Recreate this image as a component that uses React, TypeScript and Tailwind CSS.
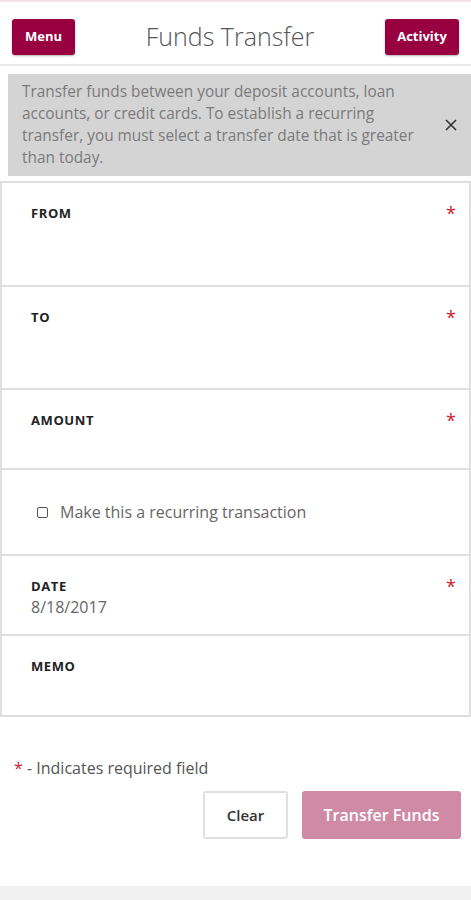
import React, { useState } from "react";

const Field = ({ label, required, value, h }: { label: string; required?: boolean; value?: string; h: string }) => (
  <div className={`flex justify-between border-b-2 border-[#dedede] pl-[29px] pr-[31px] pt-[21px] ${h}`}>
    <div>
      <div className="text-[13px] font-bold leading-[18px] tracking-[0.6px] text-[#222]">{label}</div>
      {value && <div className="mt-[2px] text-[16px] leading-[20px] text-[#666]">{value}</div>}
    </div>
    {required && <span className="mr-[-18px] text-[18px] leading-[18px] text-[#d0202e]">*</span>}
  </div>
);

const App = () => {
  const [recurring, setRecurring] = useState(false);
  const [showNotice, setShowNotice] = useState(true);

  return (
    <div className="min-h-[900px] bg-white font-['Open_Sans',sans-serif]">
      <div className="h-[2px] bg-[#f3e2e7]" />

      {/* Header */}
      <div className="flex h-[64px] items-center justify-between border-b-2 border-[#e8e8e8] px-[12px] pt-[8px]">
        <button className="h-[36px] w-[63px] rounded-[3px] bg-[#990040] text-[13px] font-bold text-white shadow-[0_1px_2px_rgba(0,0,0,0.3)]">
          Menu
        </button>
        <h1 className="text-[25px] font-light text-[#555]">Funds Transfer</h1>
        <button className="h-[36px] w-[74px] rounded-[3px] bg-[#990040] text-[13px] font-bold text-white shadow-[0_1px_2px_rgba(0,0,0,0.3)]">
          Activity
        </button>
      </div>

      {/* Notice */}
      {showNotice && (
        <div className="ml-[8px] mt-[8px] flex items-center bg-[#d4d4d4] py-[7px] pl-[14px] pr-[14px]">
          <p className="flex-1 text-[15.4px] leading-[22px] text-[#7a7a7a]">
            Transfer funds between your deposit accounts, loan accounts, or credit cards. To establish a recurring
            transfer, you must select a transfer date that is greater than today.
          </p>
          <button onClick={() => setShowNotice(false)} className="ml-[14px] text-[#333]">
            <svg width="12" height="12" viewBox="0 0 12 12">
              <path d="M1 1L11 11M11 1L1 11" stroke="#333" strokeWidth="1.6" />
            </svg>
          </button>
        </div>
      )}

      {/* Form */}
      <div className="mt-[5px] border-x-2 border-t-2 border-[#dedede]">
        <Field label="FROM" required h="h-[104px]" />
        <Field label="TO" required h="h-[103px]" />
        <Field label="AMOUNT" required h="h-[80px]" />
        <label className="flex h-[86px] cursor-pointer items-center border-b-2 border-[#dedede] pl-[35px]">
          <input
            type="checkbox"
            checked={recurring}
            onChange={e => setRecurring(e.target.checked)}
            className="h-[11px] w-[11px] appearance-none rounded-[2px] border border-[#555] checked:bg-[#990040]"
          />
          <span className="ml-[12px] text-[16px] text-[#666]">Make this a recurring transaction</span>
        </label>
        <Field label="DATE" required value="8/18/2017" h="h-[80px]" />
        <Field label="MEMO" h="h-[81px]" />
      </div>

      <div className="mt-[39px] px-[14px] text-[16px] text-[#555]">
        <span className="text-[#d0202e]">*</span> - Indicates required field
      </div>

      <div className="mt-[11px] flex justify-end gap-[14px] px-[10px]">
        <button className="h-[48px] w-[85px] rounded-[3px] border-2 border-[#e0e0e0] bg-white text-[15px] font-semibold text-[#333]">
          Clear
        </button>
        <button className="h-[48px] w-[159px] rounded-[3px] bg-[#cf8aa4] text-[16px] font-semibold text-white">
          Transfer Funds
        </button>
      </div>

      <div className="mt-[47px] h-[14px] bg-[#f0f0f0]" />
    </div>
  );
};

export default App;
